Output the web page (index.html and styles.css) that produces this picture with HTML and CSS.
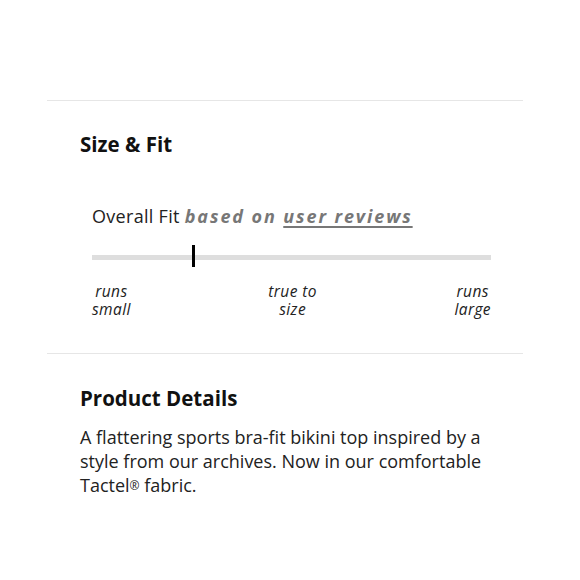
FILE: index.html
```html
<!DOCTYPE html>
<html>
<head>
<meta charset="utf-8">
<link rel="stylesheet" href="styles.css">
</head>
<body>
<div class="page">
  <section class="section fit">
    <h2 class="title">Size &amp; Fit</h2>
    <div class="fit-box">
      <p class="overall">Overall Fit <em class="based">based on <span class="link">user reviews</span></em></p>
      <div class="track"><span class="marker" style="left: 25%"></span></div>
      <div class="labels">
        <span class="lbl"><span class="ln">runs</span><span class="ln">small</span></span>
        <span class="lbl"><span class="ln">true to</span><span class="ln">size</span></span>
        <span class="lbl"><span class="ln">runs</span><span class="ln">large</span></span>
      </div>
    </div>
  </section>
  <section class="section details">
    <h2 class="title">Product Details</h2>
    <p class="desc">A flattering sports bra-fit bikini top inspired by a style from our archives. Now in our comfortable Tactel<span class="reg">®</span> fabric.</p>
  </section>
</div>
</body>
</html>
```
FILE: styles.css
```css
html, body { margin: 0; padding: 0; background: #fff; }
body { font-family: "Open Sans", Lato, sans-serif; color: #111; }
.page { margin: 0 57px 0 47px; padding-top: 100px; }
.section { border-top: 1px solid #e6e6e6; padding-left: 33px; }
.fit { height: 252px; }
.title { margin: 0; font-size: 20.5px; font-weight: 700; line-height: 24px; color: #111; }
.fit .title { padding-top: 31px; }
.fit-box { margin: 0 0 0 12px; width: 399px; padding-top: 49px; }
.overall { margin: 0; font-size: 18px; line-height: 22px; color: #222; letter-spacing: 0.3px; }
.based { font-weight: 700; color: #777; letter-spacing: 1.9px; }
.link { text-decoration: underline; text-decoration-thickness: 2px; text-underline-offset: 3px; }
.track { position: relative; height: 5px; background: #dedede; margin-top: 28px; }
.marker { position: absolute; top: -10px; width: 3px; height: 22px; background: #000; }
.labels { display: flex; justify-content: space-between; margin-top: 22px; }
.lbl { display: flex; flex-direction: column; align-items: center; font-style: italic; font-weight: 500; font-size: 15.5px; line-height: 18px; color: #222; letter-spacing: 0.4px; }
.ln { display: block; white-space: nowrap; }
.details .title { padding-top: 32px; }
.desc { margin: 15px 0 0; font-size: 18px; line-height: 24px; color: #222; width: 410px; }
.reg { font-size: 12px; line-height: 0; vertical-align: 2px; }
```
